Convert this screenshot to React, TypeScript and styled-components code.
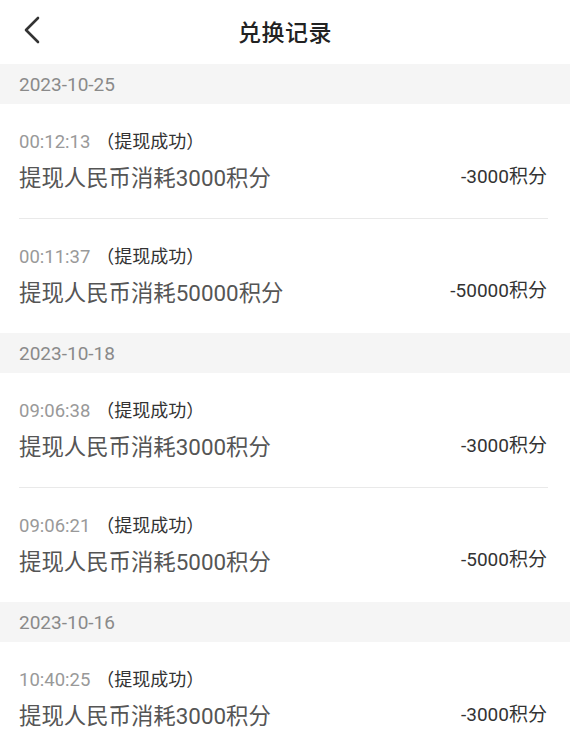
import React from "react";
import styled, { createGlobalStyle } from "styled-components";

const GlobalStyle = createGlobalStyle`
  html, body {
    margin: 0;
    padding: 0;
    background: #fff;
    font-family: Roboto, "Noto Sans CJK SC", sans-serif;
  }
  * { box-sizing: border-box; }
`;

const Page = styled.div`
  width: 570px;
  min-height: 749px;
  background: #fff;
`;

const Header = styled.div`
  height: 64px;
  padding-bottom: 3px;
  display: flex;
  align-items: center;
  justify-content: center;
  position: relative;
`;

const BackButton = styled.div`
  position: absolute;
  left: 19px;
  top: 14px;
  width: 28px;
  height: 32px;
  display: flex;
  align-items: center;
  justify-content: center;
`;

const Title = styled.h1`
  margin: 0;
  font-size: 23px;
  font-weight: 500;
  color: #222;
  letter-spacing: 0.5px;
`;

const DateBand = styled.div`
  height: 40px;
  background: #f5f5f5;
  padding-left: 19px;
  display: flex;
  align-items: center;
  font-size: 19px;
  color: #8a8a8a;
`;

const Item = styled.div<{ $divider: boolean }>`
  padding: 26px 23px 27.5px 19px;
  position: relative;
  &::after {
    content: "";
    display: ${(p) => (p.$divider ? "block" : "none")};
    position: absolute;
    left: 19px;
    right: 22px;
    bottom: 0;
    height: 1px;
    background: #e9e9e9;
  }
`;

const TimeRow = styled.div`
  height: 24px;
  line-height: 24px;
  font-size: 18.5px;
  display: flex;
  align-items: center;
`;

const Time = styled.span`
  color: #999;
`;

const Status = styled.span`
  color: #333;
  margin-left: 6px;
  font-size: 18px;
`;

const MainRow = styled.div`
  margin-top: 7px;
  height: 30px;
  display: flex;
  align-items: center;
  justify-content: space-between;
`;

const Desc = styled.span`
  font-size: 22.4px;
  color: #555;
`;

const Amount = styled.span`
  font-size: 19px;
  color: #333;
  margin-top: -4px;
`;

type Record = { time: string; points: number };
type Group = { date: string; records: Record[] };

const groups: Group[] = [
  {
    date: "2023-10-25",
    records: [
      { time: "00:12:13", points: 3000 },
      { time: "00:11:37", points: 50000 },
    ],
  },
  {
    date: "2023-10-18",
    records: [
      { time: "09:06:38", points: 3000 },
      { time: "09:06:21", points: 5000 },
    ],
  },
  {
    date: "2023-10-16",
    records: [{ time: "10:40:25", points: 3000 }],
  },
];

export default function App() {
  return (
    <Page>
      <GlobalStyle />
      <Header>
        <BackButton>
          <svg width="20" height="30" viewBox="0 0 20 30">
            <path
              d="M15 3 L3 15 L15 27"
              fill="none"
              stroke="#333"
              strokeWidth="2.6"
              strokeLinecap="round"
              strokeLinejoin="round"
            />
          </svg>
        </BackButton>
        <Title>兑换记录</Title>
      </Header>
      {groups.map((g) => (
        <div key={g.date}>
          <DateBand>{g.date}</DateBand>
          {g.records.map((r, i) => (
            <Item key={r.time} $divider={i < g.records.length - 1}>
              <TimeRow>
                <Time>{r.time}</Time>
                <Status>（提现成功）</Status>
              </TimeRow>
              <MainRow>
                <Desc>提现人民币消耗{r.points}积分</Desc>
                <Amount>-{r.points}积分</Amount>
              </MainRow>
            </Item>
          ))}
        </div>
      ))}
    </Page>
  );
}
